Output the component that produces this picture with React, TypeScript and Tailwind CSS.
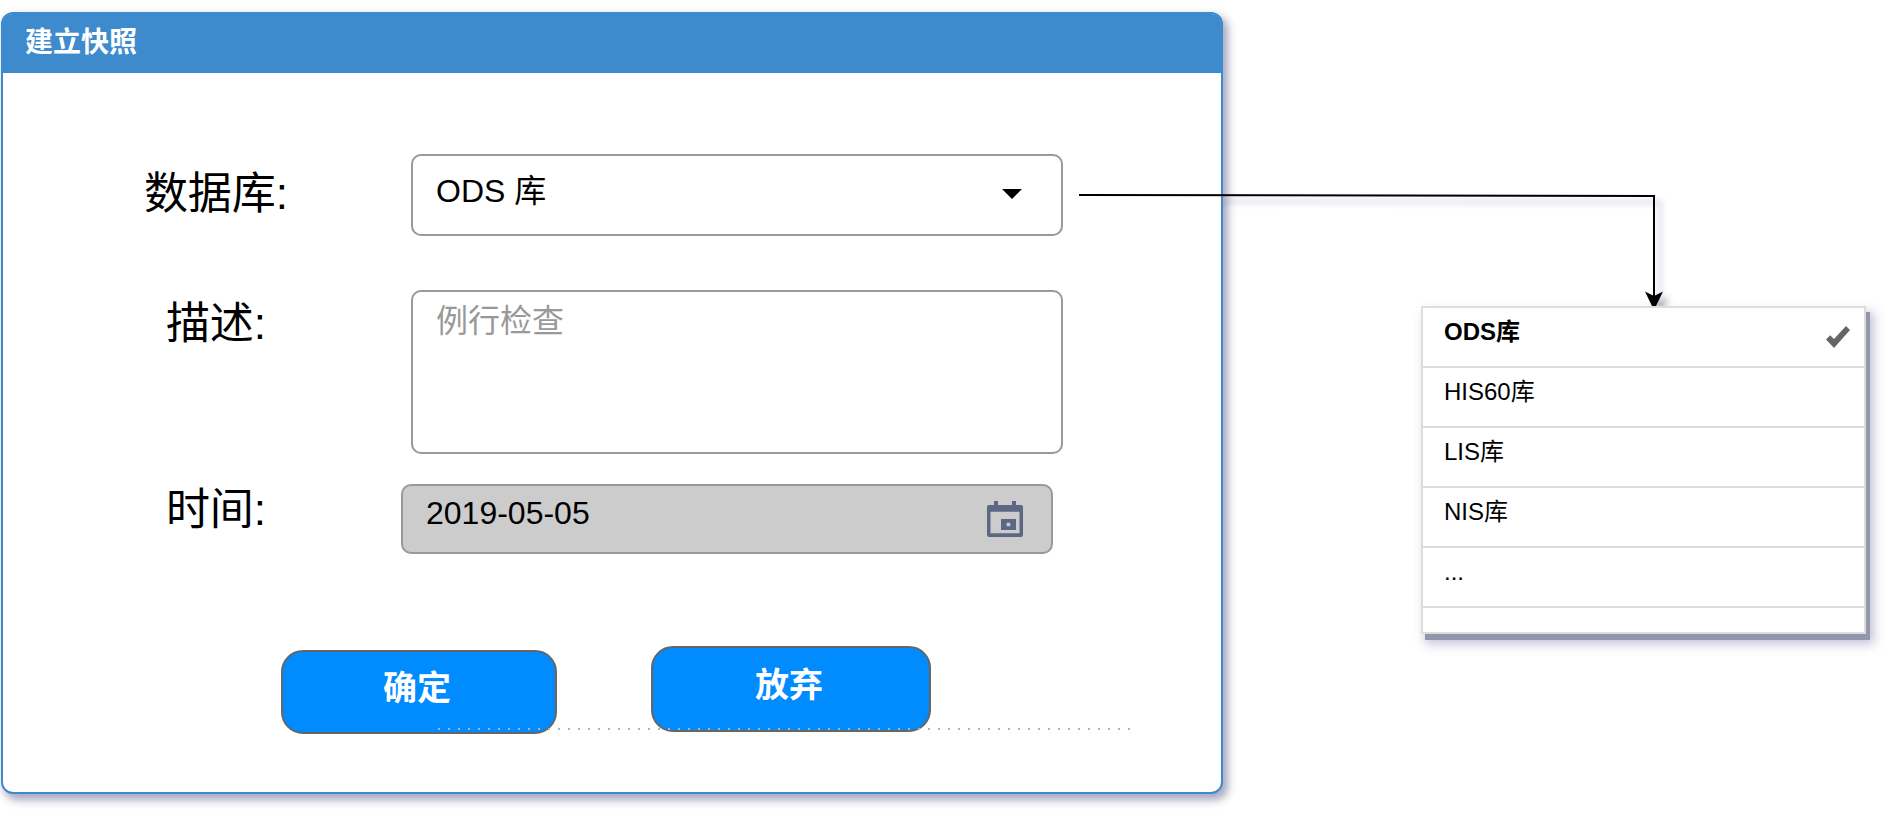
import { useState } from "react";

const databases = ["ODS库", "HIS60库", "LIS库", "NIS库", "..."];

const labelClass = "w-[210px] shrink-0 text-center text-[44px] leading-[60px]";
const fieldClass =
  "block w-full rounded-[10px] border-2 border-[#999999] pl-[23px] pr-6 text-[32px] leading-10 outline-none";
const buttonClass =
  "rounded-[22px] border-2 border-[#666666] bg-[#008cff] pb-2 pr-1 text-[34px] font-bold text-white";

function CaretIcon() {
  return (
    <svg
      className="pointer-events-none absolute right-10 top-[35px]"
      width="21"
      height="10"
      viewBox="0 0 21 10"
      aria-hidden="true"
    >
      <path d="M0 0H20L10 10Z" fill="#000000" />
    </svg>
  );
}

function CalendarIcon() {
  return (
    <svg
      className="pointer-events-none absolute right-[30px] top-[17px]"
      width="36"
      height="36"
      viewBox="0 0 36 36"
      aria-hidden="true"
    >
      <path
        fill="#5b6783"
        fillRule="evenodd"
        d="M7 0H11V4H25V0H29V4H34Q36 4 36 6V34Q36 36 34 36H2Q0 36 0 34V6Q0 4 2 4H7ZM3.500 10.700V32.300H32.500V10.700ZM14 18H29V29H14ZM19.700 21.700V25.300H23.300V21.700Z"
      />
    </svg>
  );
}

function CheckIcon() {
  return (
    <svg width="24" height="22" viewBox="0 0 24 22" aria-hidden="true">
      <path
        d="M0 13.400L4.200 9.200L8 13L20 0L24 4L8 22Z"
        fill="#666666"
      />
    </svg>
  );
}

function Connector() {
  return (
    <svg
      className="pointer-events-none absolute -left-[342px] -top-[121px] overflow-visible"
      width="600"
      height="122"
      viewBox="0 0 600 122"
      aria-hidden="true"
    >
      <defs>
        <clipPath id="outside-dialog">
          <rect x="144" y="0" width="456" height="121" />
        </clipPath>
        <filter id="soften" x="-20%" y="-20%" width="140%" height="140%">
          <feGaussianBlur stdDeviation="3" />
        </filter>
      </defs>
      <g clipPath="url(#outside-dialog)">
        <g transform="translate(6 6)" filter="url(#soften)" opacity="0.4">
          <path d="M0 10L575 11V112" fill="none" stroke="#5a5a98" strokeWidth="2" />
          <path d="M575 125L566 106L575 110L584 106Z" fill="#3d4574" />
        </g>
      </g>
      <path d="M0 10L575 11V112" fill="none" stroke="#000000" strokeWidth="2" />
      <path
        d="M573 121L566 106.500L575 111L584 106.500L577 121Z"
        fill="#000000"
      />
    </svg>
  );
}

export default function App() {
  const [selected, setSelected] = useState("ODS库");

  return (
    <main className="flex items-start bg-white pb-6 pl-px pr-7 pt-3 font-['Liberation_Sans','Noto_Sans_CJK_SC',sans-serif] text-black">
      <form
        className="min-w-0 flex-1 rounded-[12px] border-2 border-[#3d8bcd] bg-white shadow-[4px_5px_8px_1px_rgba(80,80,130,0.5)]"
        onSubmit={(event) => event.preventDefault()}
      >
        <header className="h-[59px] rounded-t-[9px] bg-[#3d8bcd] pl-[22px] pt-[9px]">
          <h1 className="text-[28px] font-bold leading-10 text-white">建立快照</h1>
        </header>

        <div className="pb-[58px] pt-[81px]">
          <div className="flex gap-[90px] pl-[108px] pr-[158px]">
            <label htmlFor="database" className={`${labelClass} pt-[10px]`}>
              数据库:
            </label>
            <div className="relative flex-1">
              <select
                id="database"
                value={selected}
                onChange={(event) => setSelected(event.target.value)}
                className={`${fieldClass} h-[82px] appearance-none bg-white pb-2`}
              >
                {databases.slice(0, 4).map((name) => (
                  <option key={name} value={name}>
                    {name.replace("库", " 库")}
                  </option>
                ))}
              </select>
              <CaretIcon />
            </div>
          </div>

          <div className="mt-[54px] flex gap-[90px] pl-[108px] pr-[158px]">
            <label htmlFor="description" className={`${labelClass} pt-1`}>
              描述:
            </label>
            <div className="flex-1">
              <textarea
                id="description"
                placeholder="例行检查"
                className={`${fieldClass} h-[164px] resize-none bg-white pt-[9px] placeholder:text-[#999999]`}
              />
            </div>
          </div>

          <div className="mt-[30px] flex items-start gap-20 pl-[108px] pr-[168px]">
            <label htmlFor="time" className={`${labelClass} -mt-1`}>
              时间:
            </label>
            <div className="relative flex-1">
              <input
                id="time"
                type="text"
                readOnly
                value="2019-05-05"
                className={`${fieldClass} h-[70px] bg-[#cccccc] pb-3`}
              />
              <CalendarIcon />
            </div>
          </div>

          <div className="relative mt-24 flex items-center gap-[94px] pl-[278px]">
            <button type="submit" className={`${buttonClass} h-[84px] w-[276px]`}>
              确定
            </button>
            <button
              type="button"
              className={`${buttonClass} -mt-[6px] h-[86px] w-[280px]`}
            >
              放弃
            </button>
            <svg
              className="pointer-events-none absolute bottom-1 left-[435px]"
              width="694"
              height="2"
              aria-hidden="true"
            >
              <line
                x1="0"
                y1="1"
                x2="694"
                y2="1"
                stroke="#b3b3b3"
                strokeWidth="2"
                strokeDasharray="2 8"
              />
            </svg>
          </div>
        </div>
      </form>

      <aside className="relative ml-[198px] mt-[294px] w-[445px] shrink-0">
        <ul className="border-2 border-[#dddddd] bg-white pb-6 shadow-[4px_6px_0_0_#9297ab,6px_8px_10px_2px_rgba(80,80,150,0.35)]">
          {databases.map((name) => (
            <li key={name} className="border-b-2 border-[#dddddd]">
              <button
                type="button"
                onClick={() => name !== "..." && setSelected(name)}
                className={`flex h-[58px] w-full items-center justify-between pb-[10px] pl-[21px] pr-[14px] text-left text-[24px] leading-8 ${
                  name === selected ? "font-bold" : "font-normal"
                }`}
              >
                {name}
                {name === selected && (
                  <span className="pt-[10px]">
                    <CheckIcon />
                  </span>
                )}
              </button>
            </li>
          ))}
        </ul>
        <Connector />
      </aside>
    </main>
  );
}
